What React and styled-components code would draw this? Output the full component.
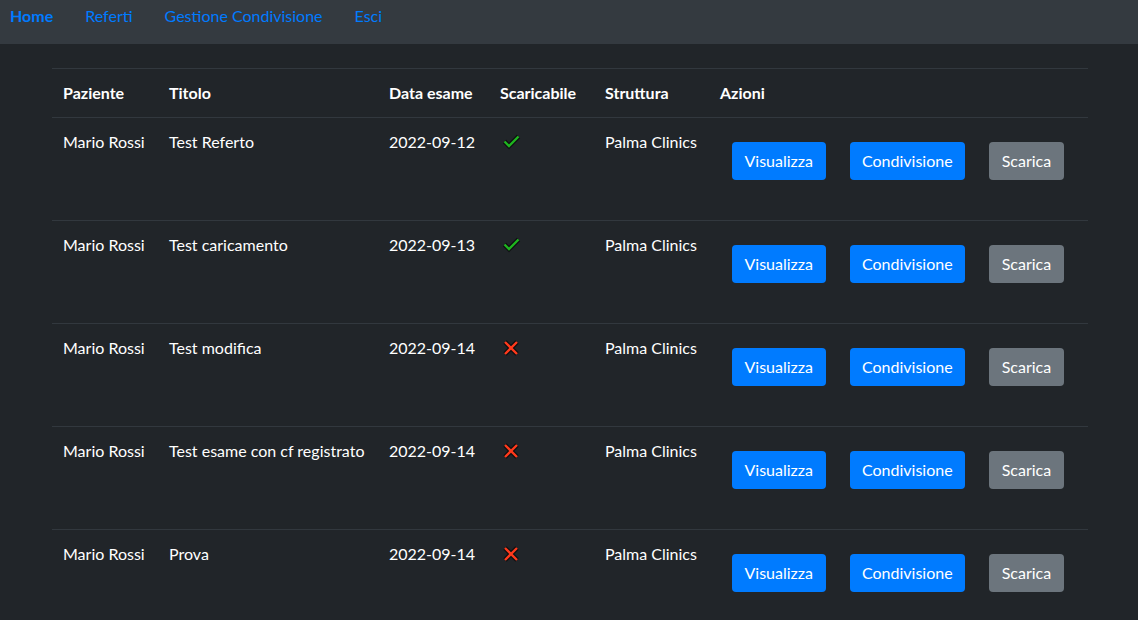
import React from "react";
import styled, { createGlobalStyle } from "styled-components";

const GlobalStyle = createGlobalStyle`
  body {
    margin: 0;
    background-color: #212529;
    color: #ffffff;
    font-family: "Lato", "Noto Sans", sans-serif;
    font-size: 16px;
    line-height: 24px;
  }
`;

const NavBar = styled.nav`
  display: flex;
  align-items: flex-start;
  height: 44px;
  background-color: #343a40;
  padding: 4px 0 0 10px;
  box-sizing: border-box;
`;

const NavLink = styled.a`
  color: #007bff;
  text-decoration: none;
  font-weight: ${p => (p.active ? 700 : 400)};
  margin-right: 32px;
  cursor: pointer;
`;

const Main = styled.main`
  padding: 24px 50px 0 52px;
`;

const Table = styled.div`
  width: 1036px;
  border-top: 1px solid #32383e;
`;

const Row = styled.div`
  display: grid;
  grid-template-columns: 106px 220px 111px 105px 115px 1fr;
  border-bottom: 1px solid #32383e;
  min-height: ${p => (p.head ? "48px" : "102px")};
`;

const Cell = styled.div`
  padding: 12px 11px;
  font-weight: ${p => (p.head ? 700 : 400)};
  white-space: nowrap;
`;

const Actions = styled.div`
  display: flex;
  align-items: flex-start;
  gap: 24px;
  padding: 24px 0 0 23px;
`;

const Button = styled.button`
  height: 38px;
  padding: 6px 12.5px;
  border: none;
  border-radius: 4px;
  font-family: inherit;
  font-size: 16px;
  line-height: 24px;
  color: #ffffff;
  background-color: ${p => (p.variant === "secondary" ? "#6c757d" : "#007bff")};
  cursor: pointer;
`;

const IconWrap = styled.span`
  display: inline-flex;
  padding: 3px 0 0 2px;
`;

const Check = () => (
  <svg width="19" height="17" viewBox="0 0 19 17">
    <path d="M2.5 8.5 L7 13 L16.5 3.5" fill="none" stroke="#0d0f10" strokeWidth="4.6" />
    <path d="M2.5 8.5 L7 13 L16.5 3.5" fill="none" stroke="#1fb51f" strokeWidth="2.4" />
  </svg>
);

const Cross = () => (
  <svg width="18" height="18" viewBox="0 0 18 18">
    <path d="M3 3 L15 15 M15 3 L3 15" fill="none" stroke="#0d0f10" strokeWidth="4.6" />
    <path d="M3 3 L15 15 M15 3 L3 15" fill="none" stroke="#ff3a1c" strokeWidth="2.4" />
  </svg>
);

const reports = [
  { patient: "Mario Rossi", title: "Test Referto", date: "2022-09-12", ok: true, place: "Palma Clinics" },
  { patient: "Mario Rossi", title: "Test caricamento", date: "2022-09-13", ok: true, place: "Palma Clinics" },
  { patient: "Mario Rossi", title: "Test modifica", date: "2022-09-14", ok: false, place: "Palma Clinics" },
  { patient: "Mario Rossi", title: "Test esame con cf registrato", date: "2022-09-14", ok: false, place: "Palma Clinics" },
  { patient: "Mario Rossi", title: "Prova", date: "2022-09-14", ok: false, place: "Palma Clinics" },
];

const App = () => {
  return (
    <>
      <GlobalStyle />
      <NavBar>
        <NavLink active>Home</NavLink>
        <NavLink>Referti</NavLink>
        <NavLink>Gestione Condivisione</NavLink>
        <NavLink>Esci</NavLink>
      </NavBar>
      <Main>
        <Table>
          <Row head>
            <Cell head>Paziente</Cell>
            <Cell head>Titolo</Cell>
            <Cell head>Data esame</Cell>
            <Cell head>Scaricabile</Cell>
            <Cell head>Struttura</Cell>
            <Cell head>Azioni</Cell>
          </Row>
          {reports.map((r, i) => (
            <Row key={i}>
              <Cell>{r.patient}</Cell>
              <Cell>{r.title}</Cell>
              <Cell>{r.date}</Cell>
              <Cell>
                <IconWrap>{r.ok ? <Check /> : <Cross />}</IconWrap>
              </Cell>
              <Cell>{r.place}</Cell>
              <Actions>
                <Button>Visualizza</Button>
                <Button>Condivisione</Button>
                <Button variant="secondary">Scarica</Button>
              </Actions>
            </Row>
          ))}
        </Table>
      </Main>
    </>
  );
};

export default App;
